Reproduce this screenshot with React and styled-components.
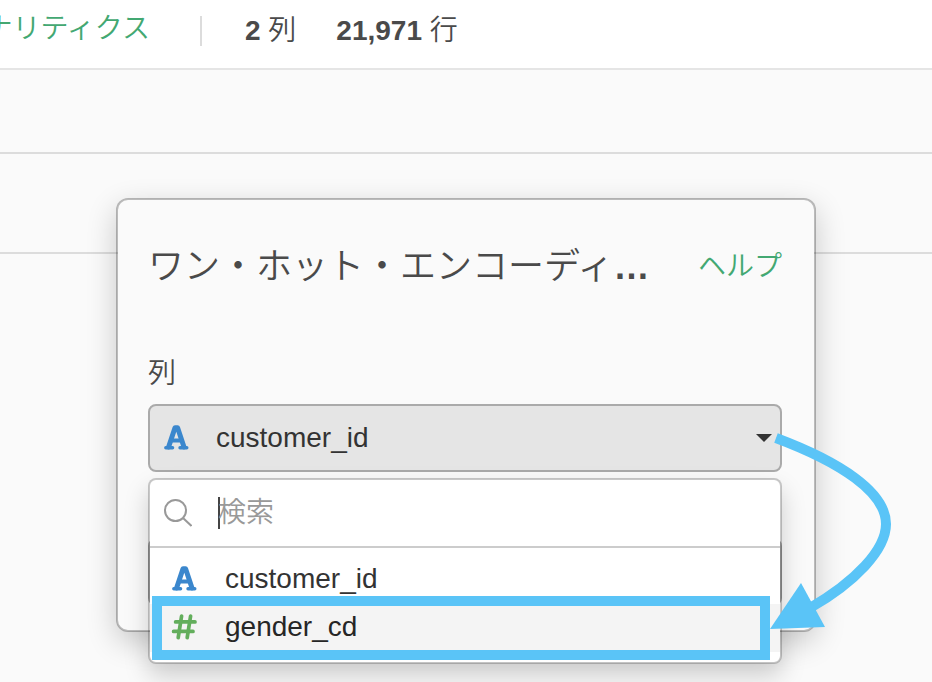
import React from 'react'
import styled, { createGlobalStyle } from 'styled-components';

const columns = [
  { name: 'customer_id', type: 'text' },
  { name: 'gender_cd', type: 'number' },
];

const TypeIcon = ({ type }) => (
  <IconBox viewBox='0 0 28 28' $type={type}>
    {type === 'text' ? <>
      <path d='M6.6 23L13 3.8h2.6L22 23' strokeWidth='5' />
      <path d='M9 16.4h10.4' strokeWidth='4' />
      <path d='M3.8 23.7h6.8M18 23.7h6.8' strokeWidth='3.4' />
    </> : <>
      <path d='M11.6 3L8.2 24.6M20.6 3L17.2 24.6' strokeWidth='3.7' />
      <path d='M5.6 8.9h19.4M3.6 18.4h19.4' strokeWidth='3.7' />
    </>}
  </IconBox>
);

const App = () => {
  return <Page>
    <GlobalStyle />
    <Header>
      <Crumb>
        <Link href='#analytics'>ナリティクス</Link>
      </Crumb>
      <Divider />
      <Stat><b>2</b> 列</Stat>
      <Stat><b>21,971</b> 行</Stat>
    </Header>
    <Strip $height='84px' />
    <Strip $height='100px' />
    <Overlay>
      <Dialog role='dialog' aria-labelledby='dialog-title'>
        <DialogHead>
          <Title id='dialog-title'>ワン・ホット・エンコーディ<b>…</b></Title>
          <Link href='#help'>ヘルプ</Link>
        </DialogHead>
        <Label htmlFor='column'>列</Label>
        <Picker>
          <Field>
            <TypeIcon type='text' />
            <Select id='column' defaultValue='customer_id'>
              {columns.map(c => <option key={c.name}>{c.name}</option>)}
            </Select>
            <Arrow viewBox='0 0 16 8'>
              <path d='M0 0h16l-8 8z' fill='#333' />
            </Arrow>
          </Field>
          <Menu>
            <SearchRow>
              <SearchIcon viewBox='0 0 28 28'>
                <circle cx='11.5' cy='11.5' r='10.5' />
                <path d='M19 19l8.5 8' />
              </SearchIcon>
              <Caret />
              <SearchInput type='text' placeholder='検索' aria-label='検索' />
            </SearchRow>
            <List>
              {columns.map(c => (
                <li key={c.name}>
                  <Option type='button' $active={c.name === 'gender_cd'}>
                    <TypeIcon type={c.type} />
                    {c.name}
                  </Option>
                </li>
              ))}
            </List>
            <Highlight />
            <Pointer viewBox='0 0 140 210'>
              <path d='M16 8C80 32 126 62 126 94C126 120 95 152 50 178' fill='none' stroke='#5ac4f7' strokeWidth='10' />
              <path d='M10 199L41 153L65 197z' fill='#5ac4f7' />
            </Pointer>
          </Menu>
        </Picker>
        <EmptyField />
      </Dialog>
    </Overlay>
  </Page>
}

const GlobalStyle = createGlobalStyle`
  * {
    box-sizing: border-box;
  }
  body {
    margin: 0;
    background: #fafafa;
    color: #4a4a4a;
    font-family: 'Liberation Sans', 'Noto Sans CJK JP', sans-serif;
    font-size: 28px;
    font-weight: 350;
    line-height: 32px;
  }
  button, input, select {
    font: inherit;
    color: inherit;
  }
`

const Page = styled.div`
  position: relative;
  min-height: 100vh;
  overflow: hidden;
`

const Header = styled.header`
  display: flex;
  align-items: center;
  height: 70px;
  padding-bottom: 6px;
  background: #fff;
  border-bottom: 2px solid #e5e5e5;
`

const Crumb = styled.nav`
  display: flex;
  justify-content: flex-end;
  flex: none;
  width: 150px;
  padding-bottom: 4px;
  white-space: nowrap;
`

const Link = styled.a`
  flex: none;
  color: #43a872;
  text-decoration: none;
`

const Divider = styled.span`
  width: 2px;
  height: 30px;
  margin: 0 3px 0 50px;
  background: #dcdcdc;
`

const Stat = styled.span`
  margin-left: 40px;
  white-space: nowrap;
  b {
    font-weight: 700;
  }
`

const Strip = styled.div`
  height: ${p => p.$height};
  border-bottom: 2px solid #dcdcdc;
`

const Overlay = styled.div`
  position: absolute;
  inset: 0;
  display: flex;
  justify-content: center;
  align-items: flex-start;
  padding-top: 198px;
`

const Dialog = styled.section`
  width: 100%;
  max-width: 700px;
  padding: 42px 32px 24px 30px;
  background: #fafafa;
  background-clip: padding-box;
  border: 2px solid rgba(0, 0, 0, 0.25);
  border-radius: 12px;
  box-shadow: 0 10px 30px rgba(0, 0, 0, 0.2);
`

const DialogHead = styled.div`
  display: flex;
  align-items: center;
  justify-content: space-between;
  margin-bottom: 66px;
`

const Title = styled.h2`
  margin: 0;
  font-size: 36px;
  font-weight: 350;
  line-height: 50px;
  white-space: nowrap;
`

const Label = styled.label`
  display: block;
  margin-bottom: 14px;
`

const Picker = styled.div`
  position: relative;
`

const Field = styled.div`
  display: flex;
  align-items: center;
  gap: 26px;
  height: 68px;
  padding: 0 8px 0 12px;
  background: #e5e5e5;
  border: 2px solid #aaa;
  border-radius: 8px;
  color: #333;
`

const IconBox = styled.svg`
  flex: none;
  width: 28px;
  height: 28px;
  fill: none;
  stroke: ${p => p.$type === 'text' ? '#3b87cd' : '#63ae5c'};
  stroke-linecap: round;
  stroke-linejoin: round;
`

const Select = styled.select`
  flex: 1;
  min-width: 0;
  height: 40px;
  padding: 0;
  appearance: none;
  background: none;
  border: 0;
`

const Arrow = styled.svg`
  flex: none;
  width: 16px;
  height: 8px;
`

const Menu = styled.div`
  position: absolute;
  top: 74px;
  left: 0;
  right: 0;
  background: #fff;
  background-clip: padding-box;
  border: 2px solid rgba(0, 0, 0, 0.2);
  border-radius: 8px;
  box-shadow: 0 12px 24px rgba(0, 0, 0, 0.18);
`

const SearchRow = styled.div`
  display: flex;
  align-items: center;
  height: 68px;
  padding: 0 14px;
  border-bottom: 2px solid #ccc;
`

const SearchIcon = styled.svg`
  flex: none;
  width: 28px;
  height: 28px;
  margin-right: 26px;
  fill: none;
  stroke: #999;
  stroke-width: 2;
`

const Caret = styled.span`
  width: 2px;
  height: 32px;
  margin-right: -2px;
  background: #444;
`

const SearchInput = styled.input`
  flex: 1;
  min-width: 0;
  height: 40px;
  padding: 0;
  background: none;
  border: 0;
  outline: 0;
  &::placeholder {
    color: #999;
  }
`

const List = styled.ul`
  margin: 0;
  padding: 8px 0 10px;
  list-style: none;
`

const Option = styled.button`
  display: flex;
  align-items: center;
  gap: 27px;
  width: 100%;
  height: 48px;
  padding: 0 20px 2px;
  background: ${p => p.$active ? '#f4f4f4' : '#fff'};
  border: 0;
  color: ${p => p.$active ? '#262626' : '#333'};
  text-align: left;
`

const Highlight = styled.div`
  position: absolute;
  top: 116px;
  left: 2px;
  right: 10px;
  bottom: 2px;
  border: 10px solid #5ac4f7;
  pointer-events: none;
`

/* runs from the field arrow down to the highlighted option */
const Pointer = styled.svg`
  position: absolute;
  top: -50px;
  right: -120px;
  width: 140px;
  height: 210px;
  pointer-events: none;
`

const EmptyField = styled.div`
  height: 68px;
  margin-top: 66px;
  border: 2px solid #aaa;
  border-radius: 8px;
`

export default App
